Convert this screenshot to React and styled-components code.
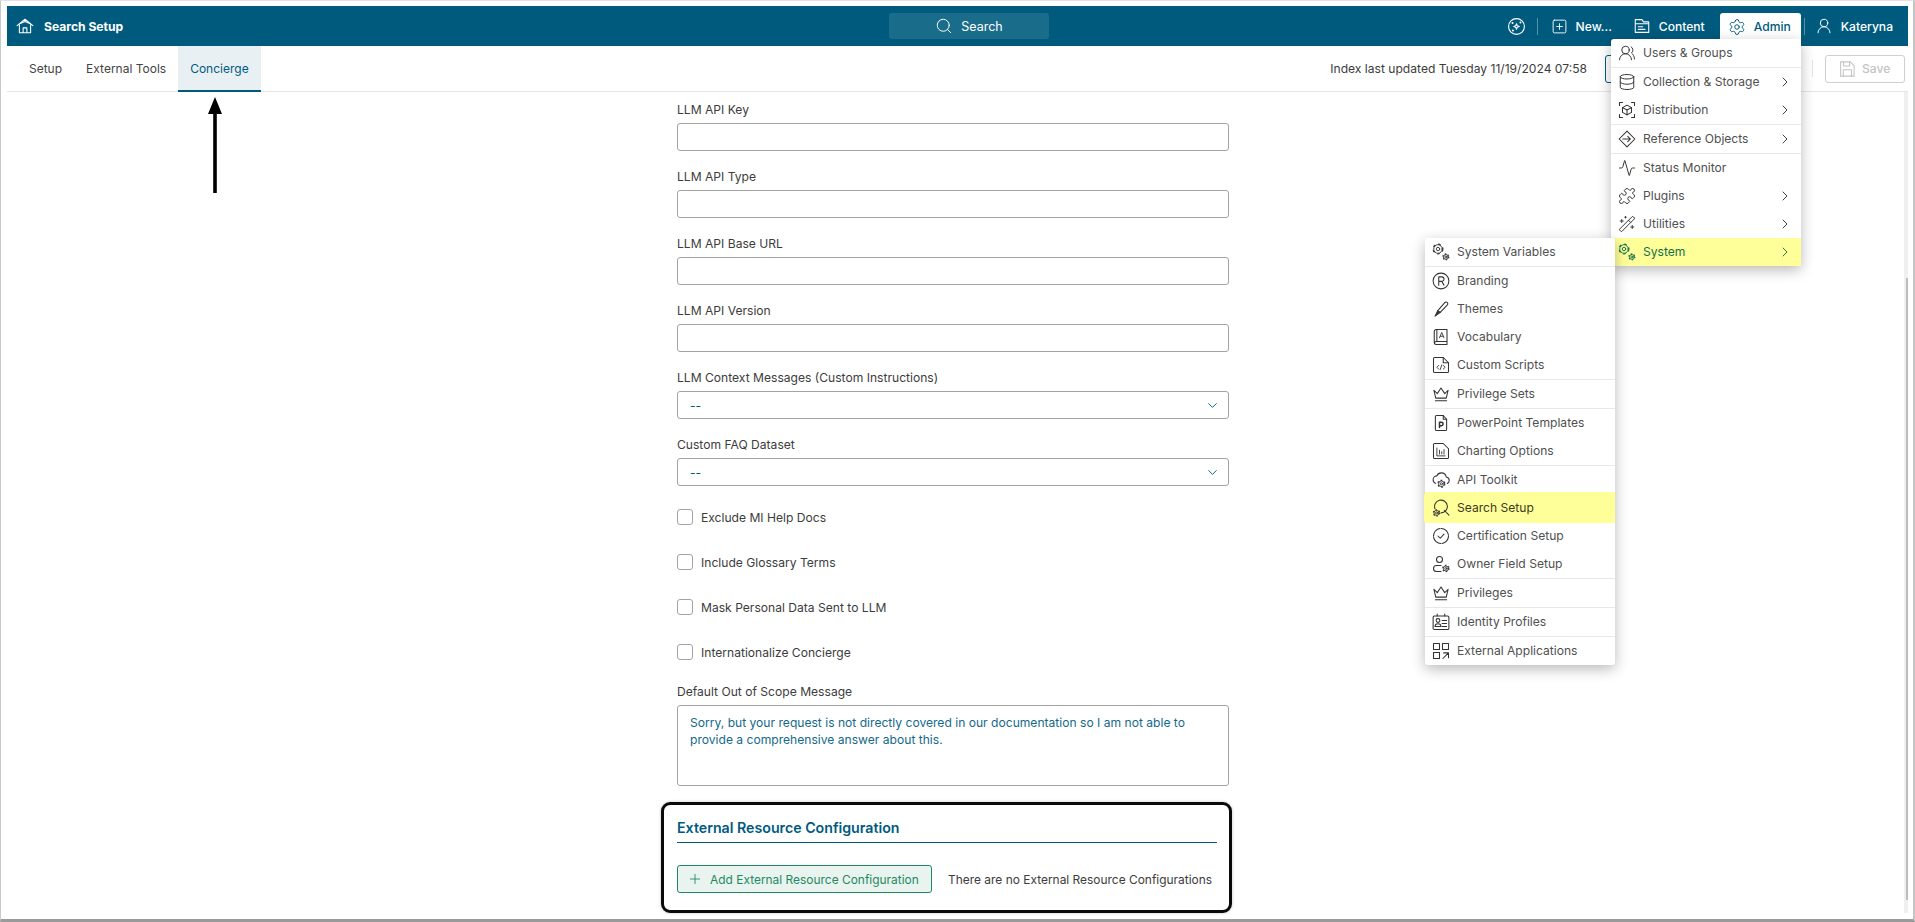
import React from "react"
import styled, { createGlobalStyle, css } from "styled-components"
import {
  Activity,
  ChevronDown,
  ChevronRight,
  Database,
  Plus,
  Puzzle,
  Search as SearchGlyph,
  Settings,
  SquarePlus,
  UserRound,
  UsersRound,
  WandSparkles,
} from "lucide-react"

const BRAND = "#005a7e"
const YELLOW = "#ffff99"

const GlobalStyle = createGlobalStyle`
  html, body {
    margin: 0;
    padding: 0;
    background: #fff;
    overflow: hidden;
  }
  * {
    box-sizing: border-box;
  }
  body {
    font-family: "Inter", "Liberation Sans", sans-serif;
    font-size: 12.1px;
    color: #333;
  }
`

const Frame = styled.div`
  width: 1915px;
  height: 922px;
  padding: 5px 1px 2px 1px;
  border-top: 1px solid #e2e2e2;
  border-left: 1px solid #c9c9c9;
  border-right: 2px solid #c4c4c4;
  border-bottom: 3px solid #9a9a9a;
  display: flex;
`

const Window = styled.div`
  position: relative;
  flex: 1;
  margin: 0 4px 0 5px;
  display: flex;
  flex-direction: column;
  min-width: 0;
`

const Header = styled.header`
  height: 40px;
  flex: none;
  background: ${BRAND};
  color: #fff;
  display: flex;
  align-items: center;
`

const Brand = styled.div`
  width: 882px;
  flex: none;
  display: flex;
  align-items: center;
  gap: 10px;
  padding-left: 9px;
  font-weight: 700;
`

const SearchBox = styled.div`
  width: 160px;
  height: 26px;
  flex: none;
  background: #1a6c8b;
  border-radius: 3px;
  display: flex;
  align-items: center;
  justify-content: center;
  gap: 8px;
  font-size: 12.5px;
`

const HeaderNav = styled.nav`
  flex: 1;
  height: 100%;
  display: flex;
  align-items: center;
  justify-content: flex-end;
`

const NavDivider = styled.span`
  width: 1px;
  height: 17px;
  background: rgba(255, 255, 255, 0.35);
  margin: ${(p) => p.$margin};
`

const NavItem = styled.div`
  display: flex;
  align-items: center;
  gap: 8px;
  font-weight: 500;
  white-space: nowrap;
  margin: ${(p) => p.$margin || 0};
  ${(p) =>
    p.$active &&
    css`
      align-self: flex-end;
      height: 33px;
      width: 81px;
      padding: 0 0 6px 8px;
      background: #fff;
      color: ${BRAND};
      border-radius: 3px 3px 0 0;
    `}
`

const SubBar = styled.div`
  height: 46px;
  flex: none;
  border-bottom: 1px solid #e6e6e6;
  padding-left: 10px;
  display: flex;
  align-items: stretch;
`

const Tab = styled.div`
  padding: 0 12px;
  display: flex;
  align-items: center;
  font-size: 12px;
  color: ${(p) => (p.$active ? BRAND : "#444")};
  ${(p) =>
    p.$active &&
    css`
      background: #e9f0f4;
      border-bottom: 2px solid ${BRAND};
      margin-bottom: -1px;
    `}
`

const BarRight = styled.div`
  margin-left: auto;
  display: flex;
  align-items: center;
  padding-right: 3px;
`

const IndexNote = styled.span`
  color: #3c3c3c;
  margin-right: 18px;
`

const GhostButton = styled.div`
  width: 60px;
  height: 28px;
  border: 1px solid ${BRAND};
  border-radius: 3px;
  margin-right: 147px;
`

const BarDivider = styled.span`
  width: 1px;
  height: 17px;
  background: #e4e4e4;
  margin-right: 12px;
`

const SaveButton = styled.div`
  width: 80px;
  height: 28px;
  border: 1px solid #cfcfcf;
  border-radius: 3px;
  color: #c4c4c4;
  display: flex;
  align-items: center;
  gap: 6px;
  padding-left: 12px;
  font-weight: 500;
`

const Body = styled.div`
  flex: 1;
  min-height: 0;
  display: flex;
`

const Main = styled.main`
  flex: 1;
  min-width: 0;
  overflow: hidden;
  padding: 11px 0 0 670px;
`

const Form = styled.div`
  width: 552px;
`

const Field = styled.div`
  margin-bottom: ${(p) => p.$gap ?? 19}px;
`

const Label = styled.div`
  height: 14px;
  line-height: 14px;
  margin-bottom: 6px;
  color: #3c3c3c;
`

const TextInput = styled.div`
  height: 28px;
  border: 1px solid #a3a3a3;
  border-radius: 3px;
  background: #fff;
`

const SelectBox = styled(TextInput)`
  display: flex;
  align-items: center;
  justify-content: space-between;
  padding: 0 8px 0 12px;
  color: ${BRAND};
`

const CheckList = styled.div`
  display: flex;
  flex-direction: column;
  gap: 29px;
  margin: 23px 0 25px;
`

const CheckRow = styled.label`
  display: flex;
  align-items: center;
  gap: 8px;
  height: 16px;
  color: #3c3c3c;
`

const CheckBox = styled.span`
  width: 16px;
  height: 16px;
  flex: none;
  border: 1px solid #a3a3a3;
  border-radius: 3px;
`

const MessageBox = styled.div`
  height: 81px;
  border: 1px solid #a3a3a3;
  border-radius: 3px;
  padding: 8px 12px;
  line-height: 17px;
  color: #14698a;
`

const Callout = styled.section`
  margin: 16px -3px 0 -16px;
  height: 111px;
  border: 3px solid #0a0a0a;
  border-radius: 9px;
  padding: 15px 12px 0 13px;
  box-shadow: 0 0 3px rgba(0, 0, 0, 0.25);
`

const SectionTitle = styled.h3`
  margin: 0 0 22px;
  height: 23px;
  line-height: 16px;
  font-size: 14.2px;
  font-weight: 600;
  color: ${BRAND};
  border-bottom: 1px solid ${BRAND};
`

const SectionRow = styled.div`
  display: flex;
  align-items: center;
  gap: 16px;
  white-space: nowrap;
  font-size: 11.95px;
`

const AddButton = styled.div`
  width: 255px;
  height: 28px;
  flex: none;
  border: 1px solid #1f8a5f;
  border-radius: 3px;
  background: #e9f3ef;
  color: #1f8a5f;
  display: flex;
  align-items: center;
  gap: 7px;
  padding-left: 9px;
`

const EmptyNote = styled.span`
  color: #3c3c3c;
`

const ScrollTrack = styled.div`
  width: 4px;
  flex: none;
  height: 821px;
  background: #f0f0f0;
  display: flex;
  justify-content: flex-end;
`

const ScrollThumb = styled.div`
  width: 2px;
  height: 622px;
  margin-top: 186px;
  background: #bdbdbd;
`

const Menu = styled.ul`
  position: absolute;
  list-style: none;
  margin: 0;
  padding: 0;
  background: #fff;
  border-radius: 3px;
  box-shadow: 0 4px 14px rgba(0, 0, 0, 0.28);
  width: ${(p) => p.$width}px;
  top: ${(p) => p.$top}px;
  right: ${(p) => p.$right}px;
  z-index: ${(p) => p.$z};
`

const MenuRow = styled.li`
  height: ${(p) => (p.$sep ? 29 : 28)}px;
  display: flex;
  align-items: center;
  gap: 7px;
  padding: 0 8px 1px 7px;
  color: #505050;
  ${(p) => p.$sep && "border-bottom: 1px solid #e8e8e8;"}
  ${(p) =>
    p.$hot &&
    css`
      background: ${YELLOW};
      color: #3a3a22;
    `}
  ${(p) =>
    p.$hot === "flag" &&
    css`
      color: #14704a;
      margin-left: 3px;
      padding-left: 4px;
    `}
  ${(p) =>
    p.$hot === "band" &&
    css`
      box-shadow: 0 -2px 0 ${YELLOW}, 0 1px 0 ${YELLOW}, -1px 0 0 ${YELLOW};
      position: relative;
    `}
  svg {
    flex: none;
    color: ${(p) => (p.$hot === "flag" ? "#14704a" : "#333")};
  }
`

const MenuLabel = styled.span`
  flex: 1;
  white-space: nowrap;
`

const Pointer = styled.svg`
  position: absolute;
  left: 192px;
  top: 85px;
`

// thin line icons, same proportions as the app's icon set
const Ico = ({ children, size = 18 }) => (
  <svg
    width={size}
    height={size}
    viewBox="0 0 24 24"
    fill="none"
    stroke="currentColor"
    strokeWidth="1.4"
    strokeLinecap="round"
    strokeLinejoin="round"
  >
    {children}
  </svg>
)

const Gear = ({ x, y, r }) => (
  <g strokeWidth="1.2">
    <circle cx={x} cy={y} r={r} />
    <circle cx={x} cy={y} r={r * 0.4} />
    <circle
      cx={x}
      cy={y}
      r={r + 0.8}
      strokeWidth="1.6"
      strokeLinecap="butt"
      strokeDasharray={`${r * 0.6} ${r * 0.72}`}
    />
  </g>
)

const HomeIcon = () => (
  <Ico size={18}>
    <path d="M1.500 11.500 12 3l10.500 8.500M4 9.500 12 6l8 3.500M4.500 10.500V21h15V10.500M9.500 21v-6.500h5V21" />
  </Ico>
)
const SparkIcon = () => (
  <Ico size={19}>
    <circle cx="12" cy="12" r="10" />
    <path d="M12 8.500 13 11l2.500 1-2.500 1-1 2.500-1-2.500-2.500-1L11 11z" />
    <circle cx="7" cy="7.500" r=".6" />
    <circle cx="17" cy="7" r=".6" />
    <circle cx="7.500" cy="17" r=".6" />
  </Ico>
)
const FolderDoc = () => (
  <Ico size={18}>
    <path d="M3 5.500v15h18V6.500h-7L12 3.500H3zM3 9h18" />
    <path d="M7 13h6M7 16.500h9" />
  </Ico>
)
const ScanBox = () => (
  <Ico>
    <path d="M2 6V2h4M18 2h4v4M22 18v4h-4M6 22H2v-4" />
    <path d="m12 5.500 6 3.300v6.400l-6 3.300-6-3.300V8.800zM6 8.800l6 3.300 6-3.300M12 12.100v6.400" />
  </Ico>
)
const RefDiamond = () => (
  <Ico>
    <path d="M12 1.500 22.500 12 12 22.500 1.500 12z" />
    <path d="M6.500 12h10M13 8.500l3.500 3.500-3.500 3.500" />
  </Ico>
)
const Gears = () => (
  <Ico>
    <Gear x={8} y={8} r={5.700} />
    <Gear x={18.500} y={18.500} r={3.200} />
  </Ico>
)
const BrandR = () => (
  <Ico>
    <circle cx="12" cy="12" r="10.500" />
    <path d="M9 17.500v-11h4a3 3 0 0 1 0 6H9M13 12.500l3 5" />
  </Ico>
)
const Brush = () => (
  <Ico>
    <path d="M7.500 14.500 17 3.500a2.300 2.300 0 0 1 3.500 3L11 16.500z" />
    <path d="M7.500 14.500 4 21.500l7-5z" fill="currentColor" />
  </Ico>
)
const BookA = () => (
  <Ico>
    <path d="M20 2H5.500A2.500 2.500 0 0 0 3 4.500v15A2.500 2.500 0 0 0 5.500 22H20v-4H5.500a1.800 1.800 0 0 0 0 4M20 2v16M6.500 2v16" />
    <path d="m10 13 3-7 3 7M11 11h4" strokeWidth="1.200" />
  </Ico>
)
const FileScript = () => (
  <Ico>
    <path d="M15 2H3.500A1.500 1.500 0 0 0 2 3.500v17A1.500 1.500 0 0 0 3.500 22h17a1.500 1.500 0 0 0 1.500-1.500V9z" />
    <path d="M15 2v7h7" />
    <path d="m9 12.500-2.500 2.500L9 17.500M15 12.500l2.500 2.500-2.500 2.500M13 12l-2 6" strokeWidth="1.200" />
  </Ico>
)
const Crown = () => (
  <Ico>
    <path d="M2.500 7 7 11.500 12 4l5 7.500L21.500 7 19 17.500H5z" />
    <path d="M4.500 21h15" />
  </Ico>
)
const FileP = () => (
  <Ico>
    <path d="M15 2H6a1.500 1.500 0 0 0-1.500 1.500v17A1.500 1.500 0 0 0 6 22h12a1.500 1.500 0 0 0 1.500-1.500V7z" />
    <path d="M15 2v5h4.500" />
    <path d="M10 18v-7h2.500a2 2 0 0 1 0 4.500H10" strokeWidth="2" />
  </Ico>
)
const FileChart = () => (
  <Ico>
    <path d="M15 2H3.500A1.500 1.500 0 0 0 2 3.500v17A1.500 1.500 0 0 0 3.500 22h17a1.500 1.500 0 0 0 1.500-1.500V9z" />
    <path d="M6.500 8v10.500h11M10 16v-5M13 16v-3M16 16v-6" strokeWidth="1.200" />
  </Ico>
)
const CloudGear = () => (
  <Ico>
    <path d="M5 16.500C2.500 15.500 1.500 13.500 1.500 11.500 1.500 8.500 4 6.500 6.500 6.500 7.500 4 9.500 2.500 12.500 2.500c3.500 0 6 2.500 6.500 5.500 2.500.5 4 2.500 4 4.800 0 1.700-1 3-2.500 3.800" />
    <Gear x={12.500} y={17} r={3.800} />
  </Ico>
)
const SearchGear = () => (
  <Ico>
    <path d="M4 13a8.500 8.500 0 1 1 8 5.500M16.500 15l6 6.500" />
    <Gear x={6} y={18.500} r={3.400} />
  </Ico>
)
const Certified = () => (
  <Ico>
    <circle cx="12" cy="12" r="10" strokeDasharray="14 1.700" />
    <path d="m8 12 3 3 5-5.500" />
  </Ico>
)
const OwnerGear = () => (
  <Ico>
    <circle cx="10" cy="6" r="4" />
    <path d="M12 14H6a4 4 0 0 0 0 8h6" />
    <Gear x={18.500} y={18} r={3.400} />
  </Ico>
)
const IdCard = () => (
  <Ico>
    <rect x="1.500" y="4" width="21" height="18" rx="1.500" />
    <path d="M7 1.500V4M17 1.500V4M13.500 10h6M13.500 14h6M13.500 18h6" />
    <circle cx="8" cy="10" r="2.500" />
    <path d="M4 18c0-5 8-5 8 0z" />
  </Ico>
)
const AppsGrid = () => (
  <Ico>
    <rect x="2" y="2" width="8" height="8" />
    <rect x="14" y="2" width="8" height="8" />
    <rect x="2" y="14" width="8" height="8" />
    <path d="m14.500 22 7.500-7.500M15.500 14.500H22V21" />
  </Ico>
)
const FloppyIcon = () => (
  <Ico size={18}>
    <path d="M3.500 2.500h13l5 5v14h-18z" />
    <path d="M7.500 2.500v5.500h8V2.500M7 21.500V13h11v8.500" />
  </Ico>
)

const thin = { size: 18, strokeWidth: 1.3 }

const ADMIN_ITEMS = [
  { icon: <UsersRound {...thin} />, label: "Users & Groups", sep: true },
  { icon: <Database {...thin} />, label: "Collection & Storage", more: true },
  { icon: <ScanBox />, label: "Distribution", more: true, sep: true },
  { icon: <RefDiamond />, label: "Reference Objects", more: true, sep: true },
  { icon: <Activity {...thin} />, label: "Status Monitor" },
  { icon: <Puzzle {...thin} />, label: "Plugins", more: true },
  { icon: <WandSparkles {...thin} />, label: "Utilities", more: true },
  { icon: <Gears />, label: "System", more: true, hot: "flag" },
]

const SYSTEM_ITEMS = [
  { icon: <Gears />, label: "System Variables", sep: true },
  { icon: <BrandR />, label: "Branding" },
  { icon: <Brush />, label: "Themes" },
  { icon: <BookA />, label: "Vocabulary" },
  { icon: <FileScript />, label: "Custom Scripts", sep: true },
  { icon: <Crown />, label: "Privilege Sets", sep: true },
  { icon: <FileP />, label: "PowerPoint Templates" },
  { icon: <FileChart />, label: "Charting Options", sep: true },
  { icon: <CloudGear />, label: "API Toolkit" },
  { icon: <SearchGear />, label: "Search Setup", hot: "band" },
  { icon: <Certified />, label: "Certification Setup" },
  { icon: <OwnerGear />, label: "Owner Field Setup", sep: true },
  { icon: <Crown />, label: "Privileges", sep: true },
  { icon: <IdCard />, label: "Identity Profiles", sep: true },
  { icon: <AppsGrid />, label: "External Applications" },
]

const TEXT_FIELDS = ["LLM API Key", "LLM API Type", "LLM API Base URL", "LLM API Version"]
const SELECT_FIELDS = ["LLM Context Messages (Custom Instructions)", "Custom FAQ Dataset"]
const CHECKS = [
  "Exclude MI Help Docs",
  "Include Glossary Terms",
  "Mask Personal Data Sent to LLM",
  "Internationalize Concierge",
]

const DropMenu = ({ items, top, right, z }) => (
  <Menu $width={190} $top={top} $right={right} $z={z}>
    {items.map((item) => (
      <MenuRow key={item.label} $sep={item.sep} $hot={item.hot}>
        {item.icon}
        <MenuLabel>{item.label}</MenuLabel>
        {item.more && <ChevronRight size={16} strokeWidth={1.4} />}
      </MenuRow>
    ))}
  </Menu>
)

export default function App() {
  return (
    <>
      <GlobalStyle />
      <Frame>
        <Window>
          <Header>
            <Brand>
              <HomeIcon />
              Search Setup
            </Brand>
            <SearchBox>
              <SearchGlyph size={18} strokeWidth={1.3} />
              Search
            </SearchBox>
            <HeaderNav>
              <SparkIcon />
              <NavDivider $margin="0 13px 0 11px" />
              <NavItem>
                <SquarePlus size={17} strokeWidth={1.3} />
                New...
              </NavItem>
              <NavItem $margin="0 15px 0 21px">
                <FolderDoc />
                Content
              </NavItem>
              <NavItem $active>
                <Settings size={18} strokeWidth={1.3} />
                Admin
              </NavItem>
              <NavDivider $margin="0 10px 0 3px" />
              <NavItem $margin="0 15px 0 0">
                <UserRound size={18} strokeWidth={1.3} />
                Kateryna
              </NavItem>
            </HeaderNav>
          </Header>
          <SubBar>
            <Tab>Setup</Tab>
            <Tab>External Tools</Tab>
            <Tab $active>Concierge</Tab>
            <BarRight>
              <IndexNote>Index last updated Tuesday 11/19/2024 07:58</IndexNote>
              <GhostButton />
              <BarDivider />
              <SaveButton>
                <FloppyIcon />
                Save
              </SaveButton>
            </BarRight>
          </SubBar>
          <Body>
            <Main>
              <Form>
                {TEXT_FIELDS.map((name) => (
                  <Field key={name}>
                    <Label>{name}</Label>
                    <TextInput />
                  </Field>
                ))}
                {SELECT_FIELDS.map((name) => (
                  <Field key={name}>
                    <Label>{name}</Label>
                    <SelectBox>
                      --
                      <ChevronDown size={15} strokeWidth={1.5} />
                    </SelectBox>
                  </Field>
                ))}
                <CheckList>
                  {CHECKS.map((name) => (
                    <CheckRow key={name}>
                      <CheckBox />
                      {name}
                    </CheckRow>
                  ))}
                </CheckList>
                <Field $gap={0}>
                  <Label>Default Out of Scope Message</Label>
                  <MessageBox>
                    Sorry, but your request is not directly covered in our documentation so I am not able to provide a comprehensive answer about this.
                  </MessageBox>
                </Field>
                <Callout>
                  <SectionTitle>External Resource Configuration</SectionTitle>
                  <SectionRow>
                    <AddButton>
                      <Plus size={16} strokeWidth={1.3} />
                      Add External Resource Configuration
                    </AddButton>
                    <EmptyNote>There are no External Resource Configurations</EmptyNote>
                  </SectionRow>
                </Callout>
              </Form>
            </Main>
            <ScrollTrack>
              <ScrollThumb />
            </ScrollTrack>
          </Body>
          <DropMenu items={ADMIN_ITEMS} top={33} right={107} z={2} />
          <DropMenu items={SYSTEM_ITEMS} top={232} right={293} z={3} />
          <Pointer width="32" height="104" viewBox="0 0 32 104">
            <path d="M16 6 23 23H17.800V102H14.200V23H9z" fill="#000" />
          </Pointer>
        </Window>
      </Frame>
    </>
  )
}
